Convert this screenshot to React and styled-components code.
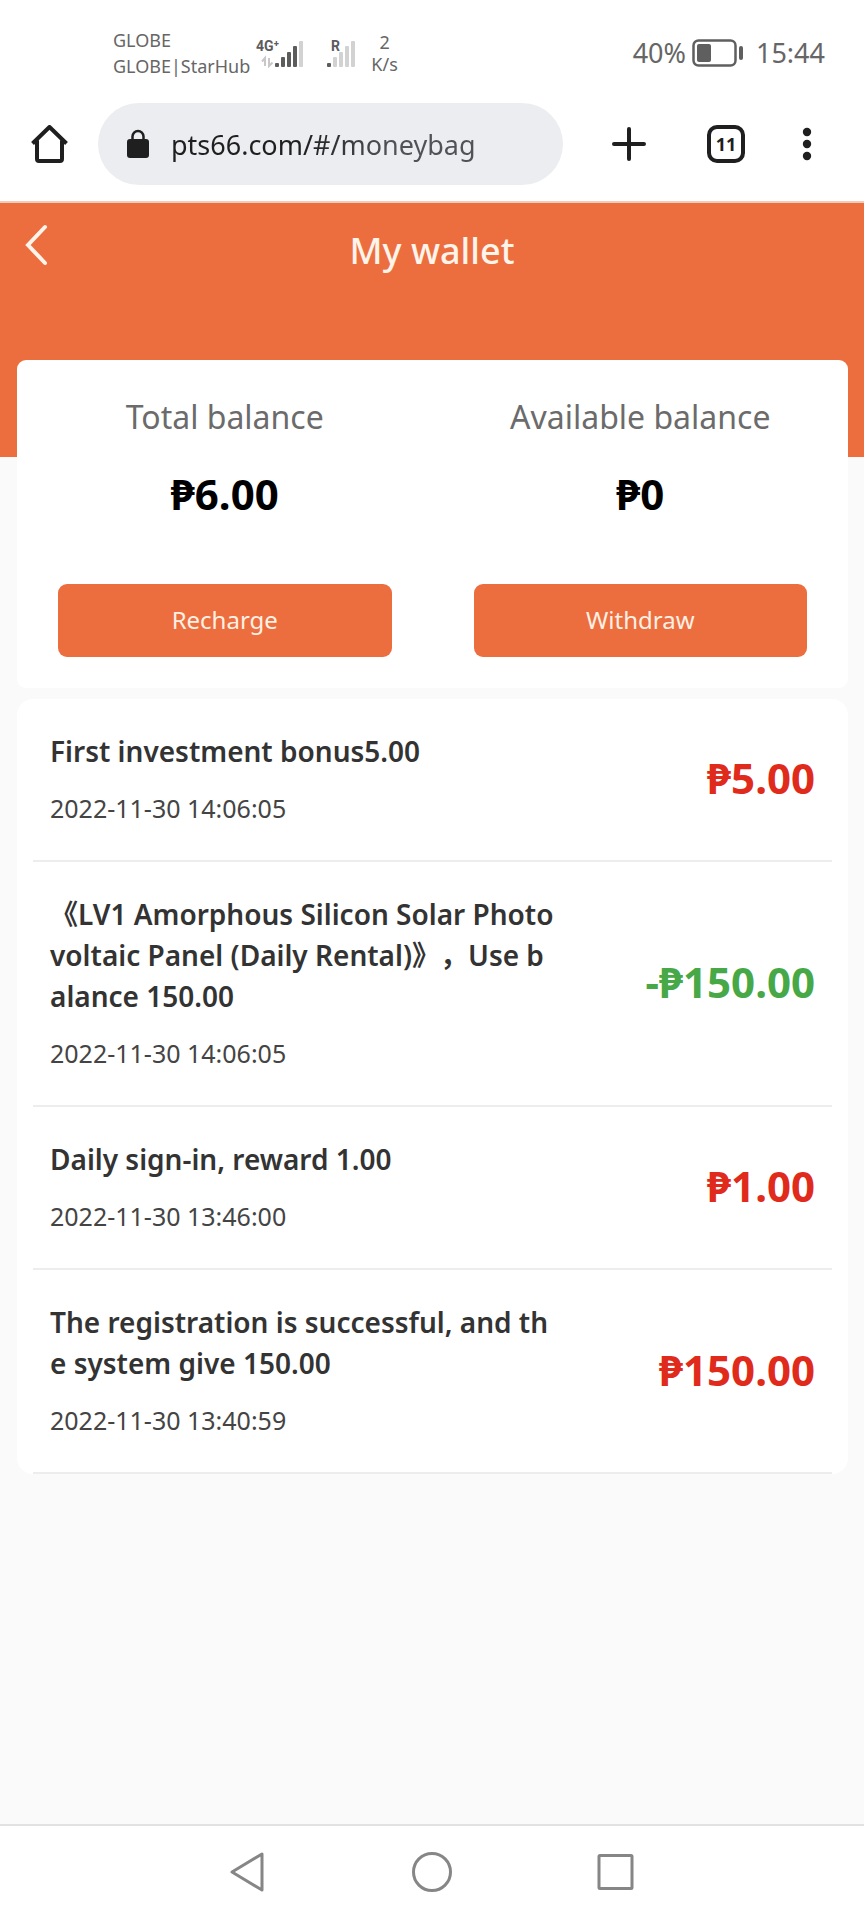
import React, { useState } from 'react';
import styled, { createGlobalStyle } from 'styled-components';

const records = [
  {
    id: 1,
    title: 'First investment bonus5.00',
    time: '2022-11-30 14:06:05',
    amount: '₱5.00',
  },
  {
    id: 2,
    title:
      '《LV1 Amorphous Silicon Solar Photovoltaic Panel (Daily Rental)》，Use balance 150.00',
    time: '2022-11-30 14:06:05',
    amount: '-₱150.00',
    spent: true,
  },
  {
    id: 3,
    title: 'Daily sign-in, reward 1.00',
    time: '2022-11-30 13:46:00',
    amount: '₱1.00',
  },
  {
    id: 4,
    title: 'The registration is successful, and the system give 150.00',
    time: '2022-11-30 13:40:59',
    amount: '₱150.00',
  },
];

const balances = [
  { label: 'Total balance', value: '₱6.00', action: 'Recharge' },
  { label: 'Available balance', value: '₱0', action: 'Withdraw' },
];

const BARS = [4, 10, 15, 21, 26];

function Signal({ label, width, start, level, data }) {
  return (
    <svg width={width} height="30" viewBox={`0 0 ${width} 30`}>
      <Signal_label x={data ? 0 : 4} y="13">
        {label}
      </Signal_label>
      {data && (
        <path
          d="M9 28V20L6 23.500M13 20V28L16.500 24.500"
          fill="none"
          stroke="#c8c8c8"
          strokeWidth="2"
        />
      )}
      {BARS.map((h, i) => (
        <rect
          key={h}
          x={start + i * 6}
          y={29 - h}
          width="4"
          height={h}
          rx="1"
          fill={i < level ? '#5c5c5c' : '#d2d2d2'}
        />
      ))}
    </svg>
  );
}

function StatusBar() {
  return (
    <Status>
      <Carrier>
        <span>GLOBE</span>
        <span>GLOBE|StarHub</span>
      </Carrier>
      <Signals>
        <Signal label="4G⁺" width={48} start={19} level={4} data />
        <Signal label="R" width={30} start={0} level={1} />
      </Signals>
      <Speed>
        <span>2</span>
        <span>K/s</span>
      </Speed>
      <Clock>
        <span>40%</span>
        <svg width="52" height="28" viewBox="0 0 52 28">
          <rect
            x="1.500"
            y="1.500"
            width="42"
            height="25"
            rx="5"
            fill="none"
            stroke="#5f5f5f"
            strokeWidth="2.500"
          />
          <rect x="5" y="5" width="14" height="18" rx="2" fill="#5f5f5f" />
          <rect x="47" y="7" width="4" height="14" rx="2" fill="#5f5f5f" />
        </svg>
        <Time>15:44</Time>
      </Clock>
    </Status>
  );
}

function BrowserBar() {
  const [url, setUrl] = useState('pts66.com/#/moneybag');
  return (
    <Toolbar>
      <Icon_button aria-label="Home" $width={37}>
        <svg width="37" height="38" viewBox="0 0 37 38">
          <path
            d="M1.500 18.500L18.500 2L35.500 18.500M6 15.500V34Q6 36 8 36H29Q31 36 31 34V15.500"
            fill="none"
            stroke="#1f1f1f"
            strokeWidth="4"
            strokeLinejoin="round"
          />
        </svg>
      </Icon_button>
      <Address>
        <svg width="22" height="30" viewBox="0 0 22 30">
          <path
            d="M5.500 12V7.500A5.500 5.500 0 0 1 16.500 7.500V12"
            fill="none"
            stroke="#1f1f1f"
            strokeWidth="2.500"
          />
          <rect x="0" y="10" width="22" height="19" rx="3" fill="#1f1f1f" />
        </svg>
        <Url
          aria-label="Address"
          value={url}
          onChange={e => setUrl(e.target.value)}
        />
      </Address>
      <Icon_button aria-label="New tab" $width={42}>
        <svg width="34" height="34" viewBox="0 0 34 34">
          <path
            d="M17 2V32M2 17H32"
            stroke="#1f1f1f"
            strokeWidth="4"
            strokeLinecap="round"
          />
        </svg>
      </Icon_button>
      <Tabs_button aria-label="Open tabs">11</Tabs_button>
      <Icon_button aria-label="Menu" $width={10}>
        <svg width="10" height="34" viewBox="0 0 10 34">
          <circle cx="5" cy="5" r="4.200" fill="#1f1f1f" />
          <circle cx="5" cy="17" r="4.200" fill="#1f1f1f" />
          <circle cx="5" cy="29" r="4.200" fill="#1f1f1f" />
        </svg>
      </Icon_button>
    </Toolbar>
  );
}

function RecordList({ items }) {
  return (
    <Record_card>
      {items.map(item => (
        <Record key={item.id}>
          <Record_body>
            <Record_title>{item.title}</Record_title>
            <Record_time>{item.time}</Record_time>
          </Record_body>
          <Amount $spent={item.spent}>{item.amount}</Amount>
        </Record>
      ))}
    </Record_card>
  );
}

function NavBar() {
  return (
    <Nav>
      <Icon_button aria-label="Back" $width={40}>
        <svg width="40" height="42" viewBox="0 0 40 42">
          <path
            d="M34 3V39L4 21Z"
            fill="none"
            stroke="#868686"
            strokeWidth="3"
            strokeLinejoin="round"
          />
        </svg>
      </Icon_button>
      <Icon_button aria-label="Home screen" $width={40}>
        <svg width="40" height="42" viewBox="0 0 40 42">
          <circle
            cx="20"
            cy="21"
            r="18.500"
            fill="none"
            stroke="#868686"
            strokeWidth="3"
          />
        </svg>
      </Icon_button>
      <Icon_button aria-label="Recent apps" $width={40}>
        <svg width="40" height="42" viewBox="0 0 40 42">
          <rect
            x="3"
            y="4.500"
            width="33"
            height="33"
            rx="1"
            fill="none"
            stroke="#868686"
            strokeWidth="3"
          />
        </svg>
      </Icon_button>
    </Nav>
  );
}

function App() {
  return (
    <Page>
      <GlobalStyle />
      <StatusBar />
      <BrowserBar />
      <Header>
        <Back_link href="#/" aria-label="Back">
          <svg width="24" height="42" viewBox="0 0 24 42">
            <path
              d="M21 3L4 21L21 39"
              fill="none"
              stroke="#fff4ea"
              strokeWidth="4"
              strokeLinecap="round"
            />
          </svg>
        </Back_link>
        <Title>My wallet</Title>
      </Header>
      <Content>
        <Balance_card>
          {balances.map(b => (
            <Balance key={b.label}>
              <Balance_label>{b.label}</Balance_label>
              <Balance_value>{b.value}</Balance_value>
              <Action>{b.action}</Action>
            </Balance>
          ))}
        </Balance_card>
        <RecordList items={records} />
      </Content>
      <NavBar />
    </Page>
  );
}

export default App;

const GlobalStyle = createGlobalStyle`
  * {
    box-sizing: border-box;
  }
  body {
    margin: 0;
    background: #fafafa;
    font-family: 'Noto Sans', 'Noto Sans CJK SC', sans-serif;
  }
  button,
  input {
    font-family: inherit;
    border: 0;
    padding: 0;
    background: none;
  }
  svg {
    display: block;
    flex: none;
  }
`;
const Page = styled.div`
  display: flex;
  flex-direction: column;
  min-height: 100vh;
`;

const Status = styled.div`
  display: flex;
  align-items: center;
  height: 83px;
  padding: 22px 39px 0 113px;
  background: #fff;
  color: #666;
`;
const Carrier = styled.div`
  display: flex;
  flex-direction: column;
  font-size: 18px;
  line-height: 26px;
`;
const Signals = styled.div`
  display: flex;
  gap: 23px;
  margin-left: 6px;
`;
const Signal_label = styled.text`
  font-family: Roboto, sans-serif;
  font-size: 14px;
  font-weight: 700;
  fill: #5c5c5c;
`;
const Speed = styled.div`
  display: flex;
  flex-direction: column;
  align-items: center;
  margin-left: 14px;
  font-size: 18px;
  line-height: 22px;
`;
const Clock = styled.div`
  display: flex;
  align-items: center;
  gap: 6px;
  margin-left: auto;
  font-size: 27px;
  line-height: 36px;
`;
const Time = styled.span`
  margin-left: 6px;
`;

const Toolbar = styled.div`
  display: flex;
  align-items: center;
  height: 120px;
  padding: 4px 52px 0 31px;
  background: #fff;
  border-bottom: 2px solid #f0cdb8;
`;
const Icon_button = styled.button`
  display: flex;
  align-items: center;
  justify-content: center;
  flex: none;
  width: ${props => props.$width}px;
  cursor: pointer;
`;
const Address = styled.div`
  display: flex;
  align-items: center;
  flex: 1;
  gap: 22px;
  min-width: 0;
  height: 82px;
  margin: 0 45px 0 30px;
  padding: 0 29px;
  border-radius: 41px;
  background: #ecedf1;
`;
const Url = styled.input`
  flex: 1;
  min-width: 0;
  height: 40px;
  font-size: 27px;
  color: transparent;
  caret-color: #1f1f1f;
  background: linear-gradient(to right, #1f1f1f 130px, #505258 220px);
  background-clip: text;
  outline: 0;
`;
const Tabs_button = styled.button`
  flex: none;
  width: 38px;
  height: 38px;
  margin: 0 57px;
  border: 4px solid #1f1f1f;
  border-radius: 10px;
  font-size: 18px;
  font-weight: 700;
  line-height: 28px;
  color: #1f1f1f;
  cursor: pointer;
`;

const Header = styled.header`
  display: grid;
  grid-template-columns: 1fr auto 1fr;
  align-items: start;
  height: 254px;
  padding: 21px 24px 0;
  background: #ec6e3f;
`;
const Back_link = styled.a`
  justify-self: start;
`;
const Title = styled.h1`
  margin: 2px 0 0;
  font-size: 36px;
  font-weight: 500;
  line-height: 50px;
  color: #fff4ea;
`;
const Content = styled.main`
  flex: 1;
  margin-top: -97px;
  padding: 0 16px 0 17px;
`;

const Balance_card = styled.section`
  display: grid;
  grid-template-columns: 1fr 1fr;
  padding-bottom: 31px;
  border-radius: 9px;
  background: #fff;
`;
const Balance = styled.div`
  display: flex;
  flex-direction: column;
  align-items: center;
  padding: 33px 41px 0;
`;
const Balance_label = styled.div`
  font-size: 32px;
  line-height: 48px;
  color: #6b6b6b;
`;
const Balance_value = styled.div`
  margin: 25px 0 62px;
  font-size: 42px;
  font-weight: 700;
  line-height: 56px;
  color: #000;
`;
const Action = styled.button`
  width: 100%;
  height: 73px;
  padding-bottom: 2px;
  border-radius: 9px;
  background: #ec6e3f;
  font-size: 24px;
  color: #fff0e4;
  cursor: pointer;
`;

const Record_card = styled.section`
  margin-top: 11px;
  padding: 0 16px;
  border-radius: 16px;
  background: #fff;
`;
const Record = styled.article`
  display: flex;
  align-items: center;
  justify-content: space-between;
  padding: 32px 17px 30px;
  border-bottom: 2px solid #ededed;
`;
const Record_body = styled.div`
  flex: 0 1 508px;
`;
const Record_title = styled.div`
  font-size: 28px;
  font-weight: 600;
  line-height: 41px;
  color: #333;
  word-break: break-all;
  text-spacing-trim: space-all;
`;
const Record_time = styled.div`
  margin: 17px 0 3px;
  font-size: 25px;
  line-height: 38px;
  color: #444;
`;
const Amount = styled.div`
  padding-bottom: 5px;
  font-size: 42px;
  font-weight: 700;
  line-height: 56px;
  white-space: nowrap;
  color: ${props => (props.$spent ? '#47a847' : '#df2a1c')};
`;

const Nav = styled.nav`
  display: flex;
  align-items: center;
  justify-content: center;
  gap: 144px;
  height: 96px;
  padding-bottom: 2px;
  border-top: 2px solid #e2e2e2;
  background: #fff;
`;
